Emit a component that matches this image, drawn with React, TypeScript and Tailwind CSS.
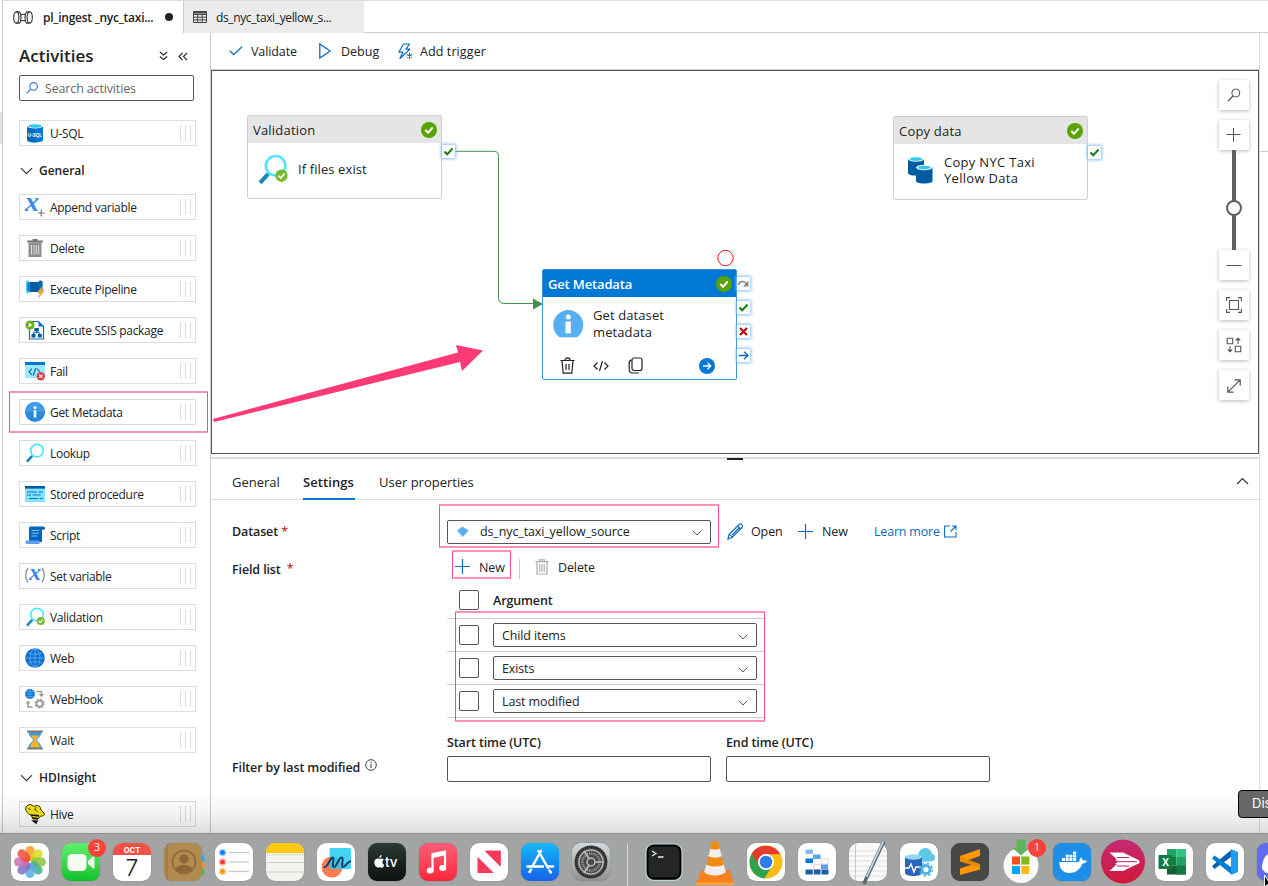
import React from "react";

type P = { children?: React.ReactNode };

const Svg = ({ w, h, vb, className = "", children }: P & { w: number; h: number; vb?: string; className?: string }) => (
  <svg width={w} height={h} viewBox={vb ?? `0 0 ${w} ${h}`} fill="none" className={`shrink-0 overflow-visible ${className}`}>
    {children}
  </svg>
);

/* ---------- activity icons (20 x 20) ---------- */
const Magnifier = ({ ok = false }: { ok?: boolean }) => (
  <>
    <path d="M7.2 12.8 2 18.6" stroke="#198ab3" strokeWidth="2.6" />
    <circle cx="12" cy="7.6" r="6.3" stroke="#50e6ff" strokeWidth="1.7" fill="#fff" />
    {ok && (
      <>
        <circle cx="15.8" cy="14" r="4" fill="#76bc2d" />
        <path d="m13.8 14 1.5 1.5 2.6-2.9" stroke="#fff" strokeWidth="1.1" />
      </>
    )}
  </>
);

const icons: Record<string, React.ReactNode> = {
  usql: (
    <>
      <path d="M2 3v14c0 1.4 3.6 2.5 8 2.5s8-1.100 8-2.500V3z" fill="#0078d4" />
      <path d="M2 3v14c0 1.400 3.600 2.500 8 2.500V3z" fill="#005ba1" opacity=".4" />
      <ellipse cx="10" cy="3" rx="8" ry="2.500" fill="#e8f7fd" />
      <ellipse cx="10" cy="3" rx="6.400" ry="1.700" fill="#32c8e8" />
      <text x="10" y="13.500" fontSize="4.600" fontWeight="700" fill="#fff" textAnchor="middle" fontFamily="Liberation Sans">U-SQL</text>
    </>
  ),
  append: (
    <>
      <text x="0" y="14" fontSize="28" fontStyle="italic" fontWeight="700" fill="#3d8be0" fontFamily="Liberation Serif">x</text>
      <path d="M16.300 12.500v7M12.800 16h7" stroke="#777" strokeWidth="1.200" />
    </>
  ),
  trash: (
    <>
      <path d="M3.500 4.500h13V19h-13z" fill="#8f8f8f" />
      <path d="M2.200 2.600h15.600v2H2.200zM7.500 1h5v2h-5z" fill="#757575" />
      <path d="M6.500 7v9.500M9 7v9.500M11.300 7v9.500M13.700 7v9.500" stroke="#fff" strokeWidth=".9" opacity=".8" />
    </>
  ),
  pipeline: (
    <>
      <path d="M3 3h12v10H3z" fill="#005ba1" />
      <rect x="1" y="1.500" width="3.600" height="13" rx="1.700" fill="#50c8f0" />
      <rect x="2.400" y="3.500" width="1.800" height="9" rx=".9" fill="#0078d4" />
      <rect x="13.400" y="1.500" width="4.200" height="13" rx="1.800" fill="#0067b8" />
      <path d="m17.500 7-5 6.300h2.800L13.500 19l5.800-7.400h-3z" fill="#fbb034" stroke="#e88a1a" strokeWidth=".4" />
    </>
  ),
  ssis: (
    <>
      <path d="M4.500 1.500h9l5 5v12.500h-14z" fill="#fff" stroke="#0f6cbd" strokeWidth="1.200" />
      <path d="M13.500 1.500v5h5z" fill="#0f6cbd" />
      <path d="M9.300 8h4.600v3.400H9.300zM6.500 14h4v3.500h-4zM12.800 14h4v3.500h-4z" fill="#005ba1" />
      <path d="M11.600 11v1.800M8.500 14.200v-1.500h6.300v1.500" stroke="#005ba1" strokeWidth=".9" />
      <circle cx="5" cy="5" r="4.600" fill="#6bb41c" />
      <path d="m3.700 2.800 3.600 2.200-3.600 2.200z" fill="#fff" />
    </>
  ),
  fail: (
    <>
      <path d="M0 1h20v16H0z" fill="#9be9fa" />
      <path d="M0 1h20v3H0z" fill="#0078d4" />
      <path d="m7 7.500-3 3.300L7 14M12 7.500l3 3.300M10.800 7 8.300 14.500" stroke="#0068b8" strokeWidth="1.100" />
      <circle cx="15.800" cy="15.300" r="4.200" fill="#e8394a" />
      <path d="m14.200 13.700 3.200 3.200m0-3.200-3.200 3.200" stroke="#fff" strokeWidth="1.200" />
    </>
  ),
  info: (
    <>
      <circle cx="10" cy="10" r="10" fill="#2a87dc" />
      <path d="M10 0a10 10 0 0 1 10 10H0A10 10 0 0 1 10 0z" fill="#3f9be8" />
      <circle cx="10" cy="5.400" r="1.500" fill="#fff" />
      <path d="M8.700 8.200h2.600v7.300H8.700z" fill="#fff" />
    </>
  ),
  lookup: <Magnifier />,
  validation: <Magnifier ok />,
  stored: (
    <>
      <path d="M0 2h20v16H0z" fill="#83e3f8" />
      <path d="M0 2h20v2.600H0z" fill="#005ba1" />
      <path d="M2 8h10M13.500 8H18M2 11h4M7.500 11h8M4 14.500h9M14.500 14.500H18" stroke="#0078d4" strokeWidth="1.200" />
    </>
  ),
  script: (
    <>
      <path d="M5 1.500h13c1.400 0 2 .8 2 1.700s-.6 1.500-1.500 1.500H17V17H4V2.800z" fill="#0067c0" />
      <path d="M1.800 15.500h12.400c-.8 1.400 0 3.500 1.600 3.500H2.200c-2.400 0-2.400-3.500-.4-3.500z" fill="#5ea0ef" />
      <path d="M6.500 5.500h7.500M6.500 8.200h7.500M6.500 11h6" stroke="#86c4f5" strokeWidth="1.100" />
    </>
  ),
  setvar: (
    <>
      <path d="M3 2c-3 4-3 10.500 0 14.500M17 2c3 4 3 10.500 0 14.500" stroke="#8a8a8a" strokeWidth="1.300" />
      <text x="4" y="14" fontSize="24" fontStyle="italic" fontWeight="700" fill="#3d8be0" fontFamily="Liberation Serif">x</text>
    </>
  ),
  web: (
    <>
      <circle cx="10" cy="10" r="9.800" fill="#0f6fd0" />
      <path d="M10 1v18M1 10h18M3 5c4 1.800 10 1.800 14 0M3 15c4-1.800 10-1.800 14 0" stroke="#62b4f3" strokeWidth=".8" />
      <ellipse cx="10" cy="10" rx="5" ry="9" stroke="#62b4f3" strokeWidth=".8" />
    </>
  ),
  webhook: (
    <>
      <circle cx="5" cy="5" r="5" fill="#0f78d6" />
      <path d="M5 0v10M0 5h10M1.200 2.500h7.600M1.200 7.500h7.600" stroke="#62b4f3" strokeWidth=".6" />
      <path d="M11.500 2.500h5V6" stroke="#999" strokeWidth="1.500" />
      <path d="m13.800 5 2.700 3.300L19.200 5zM.5 14.500 3 11.500l2.700 3z" fill="#999" />
      <path d="M3 13.500V18h4.500" stroke="#999" strokeWidth="1.500" />
      <circle cx="14.600" cy="14.600" r="3.200" stroke="#999" strokeWidth="2" />
      <circle cx="14.600" cy="14.600" r="4.500" stroke="#999" strokeWidth="1.200" strokeDasharray="1.700 1.830" />
    </>
  ),
  wait: (
    <>
      <path d="M3.500 2h13c0 5-4.500 6-4.500 8s4.500 3 4.500 8h-13c0-5 4.500-6 4.500-8s-4.500-3-4.500-8z" fill="#3e9be0" />
      <path d="M6 5.500h8c-1 2.200-3.200 3-3.200 4.500s3.500 2.500 4 7.500H5.200c.5-5 4-6 4-7.500S7 7.700 6 5.500z" fill="#ffb81c" />
      <path d="M2 .5h16v2H2zM2 17.500h16v2H2z" fill="#7a7a7a" />
    </>
  ),
  hive: (
    <>
      <path d="M1 3c1-2 4-3 6-2l2 1.500c2-1.500 5-1.500 6 .5l1 3 3 3c1.500 2-1 3.500-3.500 3L13 15H8l-2-4C2 10 0 6 1 3z" fill="#f5e211" stroke="#3a3300" strokeWidth="1" />
      <path d="m6 11 8 .8M7 14l6 .5M8.500 17h3.500l-1 2z" stroke="#1d1a00" strokeWidth="1.700" />
      <path d="m3 4 3 2M9 5l4 3M11 3l-1 3" stroke="#3a3300" strokeWidth=".8" />
    </>
  ),
};

const Chevron = () => (
  <Svg w={13} h={8}><path d="m1 1.200 5.500 5.500L12 1.200" stroke="#333" strokeWidth="1.200" /></Svg>
);

const Item = ({ icon, label }: { icon: string; label: string }) => (
  <div className="flex h-[26px] w-[177px] shrink-0 items-center border border-[#dcdcdc] pl-[5px]">
    <Svg w={20} h={20}>{icons[icon]}</Svg>
    <span className="ml-[5px] pt-0.5 text-[12px] tracking-[-0.3px]">{label}</span>
    <div className="mr-[4px] ml-auto flex h-4 gap-1">
      <div className="w-px bg-[#dcdcdc]" />
      <div className="w-px bg-[#dcdcdc]" />
      <div className="w-px bg-[#dcdcdc]" />
    </div>
  </div>
);

const general: [string, string][] = [
  ["append", "Append variable"],
  ["trash", "Delete"],
  ["pipeline", "Execute Pipeline"],
  ["ssis", "Execute SSIS package"],
  ["fail", "Fail"],
  ["info", "Get Metadata"],
  ["lookup", "Lookup"],
  ["stored", "Stored procedure"],
  ["script", "Script"],
  ["setvar", "Set variable"],
  ["validation", "Validation"],
  ["web", "Web"],
  ["webhook", "WebHook"],
  ["wait", "Wait"],
];

const Group = ({ label }: { label: string }) => (
  <div className="flex h-[48px] shrink-0 items-center gap-[6px] pt-0.5 pl-[1px] text-[12px] font-semibold">
    <Chevron />
    <span>{label}</span>
  </div>
);

const Sidebar = () => (
  <aside className="flex h-[800px] w-[208px] shrink-0 flex-col overflow-hidden border-r border-[#ccc] pl-[16px]">
    <div className="mt-[10px] flex h-[26px] items-center">
      <h1 className="text-[17px] font-semibold">Activities</h1>
      <Svg w={9} h={10} className="ml-auto"><path d="m.8 1 3.700 3L8.200 1M.8 5.500l3.700 3 3.700-3" stroke="#222" strokeWidth="1.100" /></Svg>
      <Svg w={10} h={9} className="mr-[22px] ml-[10px]"><path d="M4.500.8 1 4.500l3.500 3.700M9 .8 5.500 4.500 9 8.200" stroke="#222" strokeWidth="1.100" /></Svg>
    </div>
    <div className="mt-[6px] flex h-[26px] w-[175px] shrink-0 items-center rounded-[2px] border border-[#555] pl-[6px]">
      <Svg w={12} h={12}><circle cx="7.600" cy="4.400" r="3.800" stroke="#2f6fd6" strokeWidth="1.100" /><path d="M4.900 7.100.6 11.400" stroke="#2f6fd6" strokeWidth="1.100" /></Svg>
      <span className="ml-[7px] pt-[3px] text-[12.500px] tracking-[-0.15px] text-[#666]">Search activities</span>
    </div>
    <div className="mt-[19px] flex flex-col">
      <Item icon="usql" label="U-SQL" />
      <Group label="General" />
      <div className="flex flex-col gap-[15px]">
        {general.map(([i, l]) => <Item key={l} icon={i} label={l} />)}
      </div>
      <Group label="HDInsight" />
      <Item icon="hive" label="Hive" />
    </div>
  </aside>
);

const Tabs = () => (
  <div className="flex h-[33px] shrink-0 border-t border-[#dcdcdc]">
    <div className="flex w-[181px] items-center border-r border-[#ccc] pl-[10px]">
      <Svg w={20} h={13}>
        <ellipse cx="3.300" cy="6.500" rx="2.600" ry="5.600" stroke="#333" strokeWidth="1.100" />
        <ellipse cx="16.700" cy="6.500" rx="2.600" ry="5.600" stroke="#333" strokeWidth="1.100" />
        <path d="M3.300.9h3.200c2 2 2 9.200 0 11.200H3.300M16.700.9h-3.200c-2 2-2 9.200 0 11.200h3.200M7.600 3c1.300.6 3.500.6 4.800 0M7.600 10c1.300-.6 3.500-.6 4.800 0" stroke="#333" strokeWidth="1.100" />
      </Svg>
      <span className="ml-[10px] w-[112px] pt-0.5 text-[12px] font-semibold tracking-[-0.25px] whitespace-nowrap">pl_ingest _nyc_taxi...</span>
      <span className="ml-[10px] size-2 shrink-0 rounded-full bg-[#222]" />
    </div>
    <div className="flex w-[180px] items-center bg-[#ebebeb] pl-[9px]">
      <Svg w={14} h={12}>
        <path d="M.5.5h13v11H.5zM.5 3.500h13M.5 6.200h13M.5 8.900h13M4.700 3v8.500M9.200 3v8.500" stroke="#444" />
        <path d="M.5 1.500h13" stroke="#444" strokeWidth="2" />
      </Svg>
      <span className="ml-[9px] pt-0.5 text-[12px] tracking-[-0.38px]">ds_nyc_taxi_yellow_s...</span>
    </div>
    <div className="flex-1 border-b border-[#ccc]" />
  </div>
);

const Toolbar = () => (
  <div className="flex h-[37px] shrink-0 items-center border-b border-[#ccc] pl-[18px] text-[12.500px]">
    <Svg w={14} h={10}><path d="m.7 4.700 4 4L13 .8" stroke="#0f6cbd" strokeWidth="1.300" /></Svg>
    <span className="ml-[8px] w-[68px] pt-0.5 tracking-[-0.1px]">Validate</span>
    <Svg w={12} h={16}><path d="M.8 1v14L11.200 8z" stroke="#0f6cbd" strokeWidth="1.300" /></Svg>
    <span className="ml-[10px] w-[56px] pt-0.5">Debug</span>
    <Svg w={16} h={17}>
      <path d="M6.500 1h6L9 6.200h3.800L3 15.500l2.800-6.300H1.800z" stroke="#0f6cbd" strokeWidth="1.200" strokeLinejoin="round" />
      <path d="M12.500 10v6M9.900 11.500l5.200 3M15.100 11.500l-5.200 3" stroke="#0f6cbd" strokeWidth="1.100" />
    </Svg>
    <span className="ml-[7px] pt-0.5 tracking-[0.1px]">Add trigger</span>
  </div>
);

/* ---------- canvas ---------- */
const Passed = () => (
  <Svg w={16} h={16}><circle cx="8" cy="8" r="8" fill="#57a300" /><path d="m4.300 8 2.700 2.800 4.700-5.300" stroke="#fff" strokeWidth="2" /></Svg>
);

const Port = ({ children }: P) => (
  <div className="flex size-[13px] items-center justify-center bg-white shadow-[0_0_3px_1px_#85bdf0]">
    <Svg w={11} h={11}>{children}</Svg>
  </div>
);
const TickPort = () => <Port><path d="m1.500 5.500 2.700 2.800L9.500 2.500" stroke="#107c10" strokeWidth="2" /></Port>;

const ToolButton = ({ children }: P) => (
  <div className="flex size-[30px] items-center justify-center bg-white shadow-[0_1px_4px_rgba(0,0,0,0.28)]">
    <Svg w={16} h={16}>{children}</Svg>
  </div>
);

const Canvas = () => (
  <div className="relative h-[384px] w-[1048px] shrink-0 overflow-hidden border border-[#555] bg-white">
    <svg className="absolute top-0 left-0" width="1046" height="382" fill="none">
      <path d="M242 80.300h40q4.500 0 4.500 5v141.200q0 6 6 6h30" stroke="#468f50" strokeWidth="1" />
      <path d="M321 227.500v11l10-5.500z" fill="#468f50" />
      <circle cx="513.500" cy="187" r="7.700" stroke="#f0141e" strokeWidth="1" />
    </svg>

    <div className="absolute top-[44px] left-[35px] h-[84px] w-[195px] rounded-[2px] border border-[#d0d0d0] bg-white">
      <div className="flex h-[27px] items-center justify-between bg-[#e5e5e5] pr-[4px] pl-[5px]">
        <span className="pt-0.5 text-[13px] tracking-[0.2px]">Validation</span><Passed />
      </div>
      <div className="flex h-[54px] items-center pl-[9px]">
        <Svg w={31} h={31} vb="0 0 20 20" className="mb-[2px]"><Magnifier ok /></Svg>
        <span className="ml-[10px] text-[13px] tracking-[0.1px]">If files exist</span>
      </div>
    </div>
    <div className="absolute top-[74px] left-[230px]"><TickPort /></div>

    <div className="absolute top-[45px] left-[681px] h-[84px] w-[195px] rounded-[2px] border border-[#d0d0d0] bg-white">
      <div className="flex h-[27px] items-center justify-between bg-[#e5e5e5] pr-[4px] pl-[5px]">
        <span className="pt-0.5 text-[13px] tracking-[0.2px]">Copy data</span><Passed />
      </div>
      <div className="flex h-[54px] items-center pb-[2px] pl-[14px]">
        <Svg w={25} h={28}>
          <path d="M0 3v14c0 1.500 3 2.600 8 2.600s8-1.100 8-2.600V3z" fill="#005ba1" />
          <ellipse cx="8" cy="3" rx="8" ry="2.800" fill="#e8f7fd" /><ellipse cx="8" cy="3" rx="6" ry="1.800" fill="#32c8e8" />
          <path d="M8 11.500v13.500C8 26.500 11 27.500 16.200 27.500S24.500 26.500 24.500 25V11.500z" fill="#005ba1" />
          <ellipse cx="16.200" cy="11.500" rx="8.200" ry="2.800" fill="#e8f7fd" /><ellipse cx="16.200" cy="11.500" rx="6.200" ry="1.800" fill="#32c8e8" />
        </Svg>
        <span className="ml-[11px] text-[13px] leading-4 tracking-[0.3px]">Copy NYC Taxi<br />Yellow Data</span>
      </div>
    </div>
    <div className="absolute top-[75px] left-[876px]"><TickPort /></div>

    <div className="absolute top-[198px] left-[330px] flex h-[111px] w-[195px] flex-col rounded-[2px] border border-[#3a96dd] bg-white">
      <div className="flex h-[27px] items-center justify-between bg-[#0078d4] pr-[4px] pl-[5px] text-white">
        <span className="pt-[3px] text-[13px] font-semibold tracking-[-0.15px]">Get Metadata</span><Passed />
      </div>
      <div className="flex h-[55px] items-center pb-[2px] pl-[10px]">
        <Svg w={31} h={29}>
          <path d="M6.500 28.300a15 15 0 1 1 17.500 0z" fill="#55aff2" />
          <circle cx="15.300" cy="8" r="2.500" fill="#fff" /><path d="M12.500 12.500h5.300v12h-5.300z" fill="#fff" />
        </Svg>
        <span className="ml-[9px] text-[13px] leading-[17px] tracking-[0.1px]">Get dataset<br />metadata</span>
      </div>
      <div className="flex h-[27px] items-center pl-[17px]">
        <Svg w={15} h={17}><path d="M.5 3.500h14M5 3.200C5 .2 10 .2 10 3.200M2 3.800l1.200 12.400h8.600L13 3.800M6 7v6M9 7v6" stroke="#222" strokeWidth="1.200" /></Svg>
        <Svg w={16} h={12} className="ml-[18px]"><path d="M4.500 2.500 1 6l3.500 3.500M11.500 2.500 15 6l-3.500 3.500M9.500 1 6.500 11" stroke="#222" strokeWidth="1.200" /></Svg>
        <Svg w={15} h={17} className="ml-[19px]"><rect x="4" y="1" width="10" height="12.500" rx="2" stroke="#222" strokeWidth="1.200" /><path d="M3.500 3.200C1.500 3.500 1.200 4.500 1.200 6v6.500c0 2.500 1 3.500 3.500 3.500h6" stroke="#222" strokeWidth="1.200" /></Svg>
        <Svg w={16} h={16} className="ml-[56px]"><circle cx="8" cy="8" r="8" fill="#0078d4" /><path d="M4 8h7.500M8.500 4.800 11.700 8l-3.200 3.200" stroke="#fff" strokeWidth="1.300" /></Svg>
      </div>
    </div>
    <div className="absolute top-[206px] left-[525px] flex flex-col gap-[11px]">
      <Port><path d="M.5 7c1-4.500 6-4.500 8-1" stroke="#888" strokeWidth="1.600" /><path d="M10.500 2.500V8.500H5z" fill="#888" /></Port>
      <TickPort />
      <Port><path d="m2 2 7 7m0-7L2 9" stroke="#b00d15" strokeWidth="2.200" /></Port>
      <Port><path d="M.8 5.500h9M6 1.800l3.800 3.700L6 9.200" stroke="#0f6cbd" strokeWidth="1.500" /></Port>
    </div>

    <div className="absolute top-[9px] left-[1007px] flex flex-col text-[#555]">
      <ToolButton><circle cx="9.800" cy="6" r="4" stroke="currentColor" /><path d="m7 9-5 5" stroke="currentColor" strokeWidth="1.200" /></ToolButton>
      <div className="h-[10px]" />
      <ToolButton><path d="M7.500 1v14M.5 7.500h14" stroke="currentColor" /></ToolButton>
      <div className="relative z-10 flex h-[100px] w-[30px] justify-center">
        <div className="w-1 bg-[#616161]" />
        <div className="absolute top-[50px] size-4 rounded-full border-2 border-[#616161] bg-white" />
      </div>
      <ToolButton><path d="M.5 8.500h15" stroke="currentColor" /></ToolButton>
      <div className="h-[10px]" />
      <ToolButton><path d="M3.500 3.500h9v9h-9zM.6 4V.6H4M12 .6h3.400V4M.6 12v3.400H4M12 15.400h3.400V12" stroke="currentColor" strokeWidth="1.100" /></ToolButton>
      <div className="h-[10px]" />
      <ToolButton><path d="M1.200 1.200h5.500v5.500H1.200zM9.300 9.300h5.500v5.500H9.300zM12 7V1.300M9.800 3.500 12 1.200l2.200 2.300M4 9v5.500M1.800 12.500 4 14.800l2.200-2.300" stroke="currentColor" strokeWidth="1.100" /></ToolButton>
      <div className="h-[10px]" />
      <ToolButton><path d="m1.800 15.200 12.400-12.400M8.500 2.800h5.700v5.700M1.800 9.500v5.700h5.700" stroke="currentColor" strokeWidth="1.200" /></ToolButton>
    </div>
  </div>
);

/* ---------- settings ---------- */
const Select = ({ label, icon }: { label: string; icon?: React.ReactNode }) => (
  <div className="flex h-[24px] w-[264px] items-center rounded-[2px] border border-[#555] bg-white pr-[8px] pl-[8px]">
    {icon}
    <span className="pt-0.5">{label}</span>
    <Svg w={10} h={6} className="mt-[3px] ml-auto"><path d="m.6.6 4.400 4.300L9.400.6" stroke="#555" /></Svg>
  </div>
);
const Check = ({ className = "" }: { className?: string }) => <div className={`size-5 shrink-0 rounded-[2px] border border-[#555] bg-white ${className}`} />;
const Plus = () => <Svg w={16} h={16}><path d="M7.500 0v15M0 7.500h15" stroke="#0f6cbd" strokeWidth="1.200" /></Svg>;

const Settings = () => (
  <section className="flex flex-1 flex-col text-[12.500px] tracking-[-0.12px]">
    <div className="flex h-[40px] shrink-0 items-stretch border-b border-[#dcdcdc] pl-[21px] text-[13px] leading-[44px] tracking-normal">
      <span className="w-[71px]">General</span>
      <span className="-mb-px h-[40px] w-[52px] border-b-2 border-[#0078d4] font-semibold tracking-[0.08px]">Settings</span>
      <span className="ml-[24px]">User properties</span>
      <Svg w={13} h={8} className="mt-[17px] mr-[10px] ml-auto"><path d="M1 7 6.500 1.500 12 7" stroke="#333" strokeWidth="1.200" /></Svg>
    </div>
    <div className="mt-[16px] flex h-[31px] items-center pl-[21px]">
      <span className="w-[215px] pt-px font-semibold">Dataset <span className="text-[#d13438]">*</span></span>
      <Select label="ds_nyc_taxi_yellow_source" icon={
        <Svg w={14} h={12} className="mr-[10px]"><path d="m.8 4.500 5.500-4 6.500 4-6 6.500z" fill="#6cb8f4" /><path d="m3 3.500 6 5M5 2l5.500 4.500M11 3.500l-6 5M9 2 3.500 6.500" stroke="#3d96e0" strokeWidth=".6" /></Svg>
      } />
      <Svg w={16} h={17} className="ml-[16px]"><path d="m1 16 1-4.500L12 1.500c2-1.500 4.500.8 3 3L5 14.500zM10.500 3 14 6.300M2 11.500c1.500.3 2.700 1.500 3 3M12 5l-7 7" stroke="#0f6cbd" strokeWidth="1.200" /></Svg>
      <span className="ml-[8px] w-[47px] pt-0.5">Open</span>
      <Plus />
      <span className="ml-[8px] w-[52px] pt-0.5">New</span>
      <span className="w-[70px] pt-0.5 tracking-[-0.2px] text-[#0f6cbd]">Learn more</span>
      <Svg w={13} h={13}><path d="M6 1H.6v11H12V7M8 1h4v4M12 1 6.500 6.500" stroke="#0f6cbd" strokeWidth="1.100" /></Svg>
    </div>
    <div className="flex pl-[21px]">
      <div className="w-[215px] pt-[14px]">
        <span className="font-semibold">Field list <span className="relative -top-px ml-[3px] text-[#d13438]">*</span></span>
      </div>
      <div className="w-[317px]">
        <div className="flex h-[40px] items-center pl-[8px]">
          <Plus />
          <span className="ml-[8px] w-[40px] pt-0.5">New</span>
          <div className="mt-1 h-5 w-px bg-[#c8c8c8]" />
          <Svg w={14} h={16} className="ml-[15px]"><path d="M.5 2.700h13M4.500 2.500V.8h5v1.700M2 3v12h10V3" stroke="#aaa" strokeWidth="1.200" /><path d="M4.800 5v8M7 5v8M9.200 5v8" stroke="#aaa" strokeWidth="1.100" /></Svg>
          <span className="ml-[9px] pt-0.5">Delete</span>
        </div>
        <div className="flex h-[31px] items-start pt-[3px] pl-[12px]"><Check /><span className="ml-[14px] pt-[2px] font-semibold">Argument</span></div>
        {["Child items", "Exists", "Last modified"].map((t) => (
          <div key={t} className="flex h-[33px] items-center border-t border-[#ccc] pl-[12px]">
            <Check /><div className="ml-[14px]"><Select label={t} /></div>
          </div>
        ))}
        <div className="h-px bg-[#ccc]" />
      </div>
    </div>
    <div className="flex pl-[21px] font-semibold">
      <div className="flex w-[215px] items-start pt-[41px]">
        <span>Filter by last modified</span>
        <Svg w={12} h={12} className="ml-[5px]"><circle cx="6" cy="6" r="5.300" stroke="#444" /><path d="M6 5v4M6 2.800v1.300" stroke="#444" strokeWidth="1.200" /></Svg>
      </div>
      <div className="mt-[15px] flex gap-[15px]">
        {["Start time (UTC)", "End time (UTC)"].map((t) => (
          <div key={t}>
            <div className="h-[23px] leading-[19px]">{t}</div>
            <div className="h-[26px] w-[264px] rounded-[2px] border border-[#555] bg-white" />
          </div>
        ))}
      </div>
    </div>
  </section>
);

/* ---------- dock ---------- */
const Tile = ({ bg, children, badge }: P & { bg: string; badge?: string }) => (
  <div className="relative flex w-[51px] shrink-0 pl-[7px]">
    <div className={`size-[38px] rounded-[9px] ${bg} ${bg ? "shadow-[0_0_1px_rgba(0,0,0,0.4)]" : ""}`}>
      <svg width="38" height="38" viewBox="0 0 38 38" fill="none" className="block overflow-visible">{children}</svg>
    </div>
    {badge && <span className="absolute -top-[4px] left-[33px] flex size-[18px] items-center justify-center rounded-full bg-[#fb4238] text-[10.500px] text-white">{badge}</span>}
  </div>
);

const petals: [number, string][] = [
  [0, "#fb9a1b"], [45, "#d9d81c"], [90, "#8cc63e"], [135, "#3fb08f"], [180, "#5aa9e6"], [225, "#7f72c4"], [270, "#c471b5"], [315, "#f04e3e"],
];

const Dock = () => (
  <footer className="flex h-[53px] w-[1400px] shrink-0 border-t border-[#8f908f] bg-[#a3a5a4] pt-[9px] pl-[4px]">
    <Tile bg="bg-white">
      {petals.map(([a, c]) => <rect key={a} x="14.500" y="3" width="9" height="15" rx="4.500" fill={c} opacity=".85" transform={`rotate(${a} 19 19)`} />)}
    </Tile>
    <Tile bg="bg-gradient-to-b from-[#5df16e] to-[#0bc02b]" badge="3">
      <rect x="5.500" y="11" width="19" height="17" rx="4.500" fill="#f4fbf4" /><path d="m26 18 4.500-4c1-.8 2-.4 2 .8v9.400c0 1.200-1 1.600-2 .8l-4.500-4z" fill="#e8f7e8" />
    </Tile>
    <Tile bg="bg-white">
      <path d="M0 12V9a9 9 0 0 1 9-9h20a9 9 0 0 1 9 9v3z" fill="#f4504a" />
      <text x="19" y="9.500" fontSize="7.500" fontWeight="700" fill="#fff" textAnchor="middle" fontFamily="Inter">OCT</text>
      <text x="19" y="32.500" fontSize="23" fontWeight="300" fill="#222" textAnchor="middle" fontFamily="Inter">7</text>
    </Tile>
    <Tile bg="bg-[#b18a50]">
      <path d="M37.500 12h3v7h-3z" fill="#36a7e8" /><path d="M37.500 19h3v7h-3z" fill="#f0922b" /><path d="M37.500 26h3v6h-3z" fill="#54b948" />
      <rect width="38" height="38" rx="9" fill="#b18a50" /><path d="M3 1v36" stroke="#94703c" strokeWidth="1" />
      <circle cx="20" cy="19" r="11.500" stroke="#8a6734" strokeWidth="1.500" /><circle cx="20" cy="16" r="4.600" fill="#8a6734" /><path d="M11.500 26c3-5.500 14-5.500 17 0-4 5.500-13 5.500-17 0z" fill="#8a6734" />
    </Tile>
    <Tile bg="bg-white">
      {["#0a7cff", "#ff3b30", "#ff9500"].map((c, i) => (
        <g key={c}><circle cx="7.500" cy={9.500 + i * 9.500} r="3.400" stroke={c} opacity=".4" /><circle cx="7.500" cy={9.500 + i * 9.500} r="2.500" fill={c} /><path d={`M14 ${9.500 + i * 9.500}h20`} stroke="#c8c8c8" strokeWidth="1.200" /></g>
      ))}
    </Tile>
    <Tile bg="bg-[#f4f3ef]">
      <path d="M0 10V9a9 9 0 0 1 9-9h20a9 9 0 0 1 9 9v1z" fill="#fdc811" /><path d="M1 12h36" stroke="#bbb" strokeDasharray="1 1.500" /><path d="M0 19.500h38M0 29h38" stroke="#d4d2cc" />
    </Tile>
    <Tile bg="bg-white">
      <circle cx="15" cy="24" r="10.500" fill="#fd7c51" /><rect x="12.500" y="5" width="21.500" height="21" rx="1.500" fill="#22cdf3" opacity=".85" />
      <path d="M7 24c4 1 6-9.500 8.500-9.500s-1.500 9.500 1.500 9.500 4.500-9.500 7.500-9.500-1 9.500 1.500 9.500 4-5.500 8-6" stroke="#123c66" strokeWidth="1.900" />
    </Tile>
    <Tile bg="bg-gradient-to-b from-[#2b3a35] to-[#0c1011]">
      <path d="M11.500 15c-.3-1.500.6-3 2-3.300.2 1.600-.8 3-2 3.300zM11.500 16c1-.6 3.200-.8 4.300.7-2.200 1.500-1.600 4.300.5 5.200-1 2.500-2.200 3.300-3.600 2.600-.8-.3-1.400-.3-2.200 0-2.600 1-5.300-4.500-3.700-7.200 1.200-2 3.300-2 4.700-1.300z" fill="#fff" />
      <text x="17" y="24" fontSize="13.500" fontWeight="500" fill="#fff" fontFamily="Inter">tv</text>
    </Tile>
    <Tile bg="bg-gradient-to-b from-[#fb5c74] to-[#fa233b]">
      <path d="M13.500 27V11.200L26 8.500v15.800" stroke="#fff" strokeWidth="2.200" /><path d="M13.500 13.500 26 10.800" stroke="#fff" strokeWidth="3" /><ellipse cx="11.200" cy="27.500" rx="3.500" ry="3" fill="#fff" /><ellipse cx="23.700" cy="25" rx="3.500" ry="3" fill="#fff" />
    </Tile>
    <Tile bg="bg-white">
      <path d="M16 7.700h14.700v15zM7.700 14.500v15.500h15.500z" fill="#f5395b" /><path d="M7.700 7.700h1.500l21.500 21v1.500h-1.500L7.700 9.200z" fill="#fff" />
      <path d="M14.500 7.700h16v16zM7.700 14v16h16z" fill="#f5395b" />
    </Tile>
    <Tile bg="bg-gradient-to-b from-[#1cb8f8] to-[#1a62e8]">
      <path d="m20 8-8.500 15M17.500 8 27 25M6.500 23.500h15.500M27 23.500h5M10 26.500l-1.500 2.500M28.500 27.500l1.300 2" stroke="#fff" strokeWidth="2.500" strokeLinecap="round" />
    </Tile>
    <Tile bg="bg-gradient-to-b from-[#cfdce0] to-[#8f8f90]">
      <circle cx="19" cy="19" r="16.500" fill="#4a4a4b" /><circle cx="19" cy="19" r="15" stroke="#222" strokeWidth="2" strokeDasharray="1.200 1" /><circle cx="19" cy="19" r="12" stroke="#b5b5b5" strokeWidth="1.500" /><circle cx="19" cy="19" r="8.500" stroke="#999" strokeWidth="2.500" strokeDasharray="1 .8" /><circle cx="19" cy="19" r="4" stroke="#bbb" strokeWidth="1.500" /><path d="M22 19h10M17.500 21.500 12 30M17.500 16.500 12 8" stroke="#bbb" strokeWidth="1.700" />
    </Tile>
    <div className="flex w-[22px] shrink-0 justify-center"><div className="h-[44px] w-px bg-[#d8d8d8]" /></div>
    <Tile bg="">
      <rect x="1" y=".8" width="36" height="36.500" rx="8" fill="#000" stroke="#bcd3d8" strokeWidth="1.200" /><rect x="3.500" y="3.500" width="31" height="31" rx="5.500" fill="#252525" />
      <path d="m7 8 4 2.500L7 13M13 14h5.500" stroke="#eee" strokeWidth="1.300" />
    </Tile>
    <Tile bg="">
      <path d="M5.500 27h28L38 41H0z" fill="#f5821f" /><path d="M0 39.500h38V42H0z" fill="#ffa33a" />
      <path d="M15.800-1.500h6.400L29.500 30c-4 4.500-17 4.500-21 0z" fill="#f58a12" /><path d="m14.300 5.500-2 7.500c3 2.200 10.400 2.200 13.400 0l-2-7.500c-2 1.400-7.400 1.400-9.400 0zM10.200 21.500 8.200 29c4 4.500 17.600 4.500 21.600 0l-2-7.500c-4 2.800-13.600 2.800-17.600 0z" fill="#efefef" />
    </Tile>
    <Tile bg="bg-white">
      <circle cx="19" cy="19" r="16.500" fill="#fbbc16" /><path d="M4.700 10.800A16.500 16.500 0 0 1 33.300 11L19 11.500l-7.500 11z" fill="#e23c2e" /><path d="M4.700 10.800A16.500 16.500 0 0 0 17.500 35.500l7.500-12.500-13 0z" fill="#2fa24c" />
      <circle cx="19" cy="19" r="8" fill="#fff" /><circle cx="19" cy="19" r="6.300" fill="#2b7de9" />
    </Tile>
    <Tile bg="bg-white">
      <path d="M7.500 6.500h7.500v4.500H7.500z" fill="#83b9f9" /><path d="M15 11.500h7.500V16H15z" fill="#5ea0ef" /><path d="M7.500 15.500H15V20H7.500z" fill="#0078d4" /><path d="M23 16h7.500v5H23zM15.500 21.500H23v5h-7.500z" stroke="#ddd" fill="#fff" /><path d="M23 21.500h7v4.500h-7z" fill="#5ea0ef" /><path d="M7.500 26.500h23v5h-23z" fill="#1b5fa3" /><path d="M15.300 26v6M23 26v6" stroke="#fff" />
    </Tile>
    <Tile bg="bg-[#fafafa]">
      <path d="M0 8h38M0 13h38M0 18h38M0 23h38M0 28h38M0 33h38" stroke="#ddd" /><path d="M6.500 0v38" stroke="#f4b6b6" /><path d="M35-2 17 36l-2 5" stroke="#5b6672" strokeWidth="3.600" /><path d="M34.500-2 17.500 34" stroke="#bfd0dc" strokeWidth="1.800" />
    </Tile>
    <Tile bg="bg-white">
      <path d="M17 19c-2.500 0-3-5 1-5.300C18 9 21 5 25 5s6.500 2.500 7 6c3 .5 3.500 2.500 3 4.500s-2 3-4 3z" fill="#5fc8e8" />
      <path d="M5 14v16c0 1.700 4 3 8.500 3S22 31.700 22 30V14z" fill="#2a63b8" /><ellipse cx="13.500" cy="14" rx="8.500" ry="2.800" fill="#8fd9f0" /><path d="M5 25h4l2-4 3 8 2-5h5" stroke="#fff" strokeWidth="1.400" />
      <circle cx="26" cy="26.500" r="4" stroke="#4bb4e0" strokeWidth="2.800" /><circle cx="26" cy="26.500" r="6.200" stroke="#4bb4e0" strokeWidth="1.700" strokeDasharray="2.400 2.470" />
    </Tile>
    <Tile bg="bg-[#474747]">
      <path d="m9 13 20-7v7l-13 4.500 13 3.500v5.500L9 32v-6.500l12.500-4L9 18.500z" fill="#ff9800" /><path d="m9 13 0 5.500L29 25v-4z" fill="#e98500" opacity=".7" />
    </Tile>
    <Tile bg="" badge="1">
      <circle cx="19" cy="22.500" r="17.500" fill="#fafafa" /><path d="M10 13.500h8v8h-8z" fill="#f1511b" /><path d="M19.300 13.500h8v8h-8z" fill="#80bb1c" /><path d="M10 23h8v8h-8z" fill="#00a4ee" /><path d="M19.300 23h8v8h-8z" fill="#fbb91a" />
      <path d="M14.500-3.500h9V5h4L19 12.500 10.500 5h4z" fill="#5fb55c" />
    </Tile>
    <Tile bg="bg-[#1d8fe8]">
      <path d="M6.500 19H26c1-2 .5-3.500 2-4.500 1.500 1 1.500 2 1.500 3 1.500-.5 3.500-.5 4.500.5-1 2-3 2.500-4.500 2.500C27 27 22 30 16.500 30 9.500 30 6 25 6.500 19z" fill="#fff" />
      <path d="M9 15h3v3H9zM12.700 15h3v3h-3zM16.400 15h3v3h-3zM20.100 15h3v3h-3zM12.700 11.800h3v2.700h-3zM16.400 11.800h3v2.700h-3zM20.100 11.800h3v2.700h-3zM20.100 8.500h3v2.700h-3z" fill="#fff" />
    </Tile>
    <Tile bg="">
      <defs><linearGradient id="sk" x1="0" y1="0" x2="0" y2="1"><stop stopColor="#c22a72" /><stop offset="1" stopColor="#d3173c" /></linearGradient></defs>
      <circle cx="19" cy="18.500" r="22" fill="url(#sk)" /><path d="M5.500 9.500H19L35.500 17.600H14zM5.500 28H19l16.500-8.100H14z" fill="#fff" /><path d="M19 11.500 35.500 17.800v2L19 26v-5h-8l3-2.200-3-2.300h8z" fill="#fff" /><path d="M13 18.700h20M13 14.500h12M13 23h12" stroke="#c81e58" strokeWidth="1" />
    </Tile>
    <Tile bg="bg-white">
      <path d="M12 6h9.500v8H12z" fill="#21a366" /><path d="M21.500 6H31v8h-9.500z" fill="#33c481" /><path d="M12 14h9.500v8.500H12z" fill="#107c41" /><path d="M21.500 14H31v8.500h-9.500z" fill="#21a366" /><path d="M12 22.500h19v9H12z" fill="#185c37" /><path d="M21.500 22.500H31v9h-9.500z" fill="#107c41" />
      <rect x="3.500" y="12" width="14" height="14" rx="1" fill="#107c41" /><text x="10.500" y="22.500" fontSize="10" fontWeight="700" fill="#fff" textAnchor="middle" fontFamily="Open Sans">X</text>
    </Tile>
    <Tile bg="bg-white">
      <path d="m6 23 19-16v7L8.500 26z" fill="#0065a9" /><path d="M6 15.500 25 31v-7L8.500 12.500z" fill="#007acc" /><path d="m25 6 7 3v20l-7 3z" fill="#1f9cf0" />
    </Tile>
    <Tile bg="bg-[#5f6cf0]">
      <path d="M5 26c0-8 3-14 7-15l7-1v20H9z" fill="#fff" /><path d="M7.500 32V44l5-4z" fill="#000" stroke="#fff" />
    </Tile>
  </footer>
);

/* Highlight frames drawn above the page */
const Frame = ({ className }: { className: string }) => (
  <div className={`absolute rounded-[1px] border-x border-y-2 border-x-[#fb4c84] border-y-[#fd92b4] ${className}`} />
);

export default function App() {
  return (
    <div className="relative flex h-[886px] w-[1268px] flex-col overflow-hidden bg-white font-['Open_Sans','Noto_Sans',sans-serif] text-[#222]">
      <div className="flex h-[833px] shrink-0">
        <div className="w-[3px] shrink-0 border-r border-[#ccc] pt-[112px]"><div className="h-8 w-[2px] bg-[#e2e2e2]" /></div>
        <div className="flex flex-1 flex-col">
          <Tabs />
          <div className="flex flex-1">
            <Sidebar />
            <main className="flex w-[1049px] shrink-0 flex-col border-r border-[#dcdcdc]">
              <Toolbar />
              <Canvas />
              <div className="mt-[3px] flex h-[3px] shrink-0 justify-center border-t-2 border-[#dcdcdc]"><div className="-mt-px h-[2px] w-4 shrink-0 bg-[#222]" /></div>
              <Settings />
            </main>
            <div className="flex-1 pt-[118px]"><div className="h-px bg-[#ccc]" /></div>
          </div>
        </div>
      </div>
      <div className="pointer-events-none absolute top-[788px] left-0 h-[45px] w-full bg-gradient-to-b from-transparent via-black/4 to-black/13" />
      <Dock />
      <svg className="absolute top-[340px] left-[206px]" width="290" height="90">
        <path d="M7 79 252 12.500 250 5l27 5.500-21 20.500-2-9L8 82z" fill="#fd3a76" />
      </svg>
      <Frame className="top-[391px] left-[9px] h-[42px] w-[199px]" />
      <Frame className="top-[504px] left-[439px] h-[44px] w-[280px]" />
      <Frame className="top-[550px] left-[452px] h-[29px] w-[59px]" />
      <Frame className="top-[611px] left-[455px] h-[111px] w-[310px]" />
      <div className="absolute top-[790px] left-[1238px] flex h-[28px] w-[60px] items-center rounded-[4px] border border-black bg-[#666769] pl-[13px] font-['Inter',sans-serif] text-[13px] text-white">Disc</div>
    </div>
  );
}
